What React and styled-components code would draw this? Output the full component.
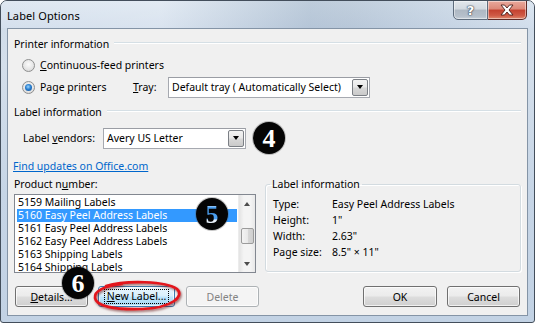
import React from 'react';
import styled, { createGlobalStyle } from 'styled-components';

const Global = createGlobalStyle`
  html, body { margin: 0; padding: 0; width: 535px; height: 323px; overflow: hidden; background: #ffffff; }
  body { font-family: "Noto Sans", "Open Sans", sans-serif; font-size: 10.5px; color: #000; }
  * { box-sizing: border-box; }
`;

const Window = styled.div`
  width: 535px;
  height: 323px;
  border: 1px solid #434e5b;
  border-radius: 7px 7px 3px 3px;
  background: linear-gradient(180deg, #cfdbe8 0%, #d4dfeb 20%, #c6d5e6 60%, #c2d2e4 100%);
  display: flex;
  flex-direction: column;
  overflow: hidden;
  position: relative;
`;

const TitleBar = styled.div`
  height: 27px;
  display: flex;
  align-items: flex-start;
  justify-content: space-between;
  padding: 0 6px 0 6px;
  background:
    linear-gradient(90deg, rgba(255,255,255,0.15) 0%, rgba(255,255,255,0.25) 30%, rgba(110,135,160,0.25) 58%, rgba(90,115,140,0.18) 66%, rgba(150,170,190,0.25) 75%, rgba(255,255,255,0.1) 100%),
    linear-gradient(180deg, #d9e4ef 0%, #cddaea 100%);
`;

const Title = styled.div`
  margin-top: 7px;
  font-size: 11px;
  color: #000;
  letter-spacing: 0.1px;
`;

const CaptionButtons = styled.div`
  display: flex;
  margin-top: -1px;
  margin-right: 1px;
`;

const CaptionButton = styled.div`
  height: 20px;
  width: ${p => p.$w}px;
  display: flex;
  align-items: center;
  justify-content: center;
  border: 1px solid ${p => (p.$close ? '#5f2a26' : '#5e6c7c')};
  border-left-width: ${p => (p.$close ? 0 : 1)}px;
  border-radius: ${p => (p.$close ? '0 0 5px 0' : '0 0 0 5px')};
  background: ${p =>
    p.$close
      ? 'linear-gradient(180deg, #e9a99c 0%, #dc8878 45%, #c4412f 50%, #cf5a45 80%, #e08a6e 100%)'
      : 'linear-gradient(180deg, #e2e7ec 0%, #d2d9e0 45%, #aeb8c3 50%, #b6c0cb 85%, #c8d1da 100%)'};
  box-shadow: inset 0 0 0 1px rgba(255,255,255,0.45);
`;

const HelpGlyph = styled.span`
  font-family: "DejaVu Sans", sans-serif;
  font-weight: bold;
  font-size: 13px;
  color: #ffffff;
  text-shadow: 0 0 1px #3b4756, 0 0 1px #3b4756, 0 0 2px #3b4756;
  line-height: 1;
`;

const Client = styled.div`
  flex: 1;
  margin: 0 6px 6px 6px;
  border: 1px solid #8494a6;
  background: #f0f0f0;
  padding: 8px 6px 0 6px;
  display: flex;
  flex-direction: column;
  position: relative;
`;

const Heading = styled.div`
  display: flex;
  align-items: center;
  height: 14px;
  margin-top: ${p => p.$mt || 0}px;
  gap: 5px;
`;

const HeadingText = styled.span`
  white-space: nowrap;
`;

const HeadingLine = styled.span`
  flex: 1;
  height: 2px;
  margin-top: -2px;
  border-top: 1px solid #d5dfe5;
  border-bottom: 1px solid #ffffff;
`;

const Row = styled.div`
  display: flex;
  align-items: center;
  height: ${p => p.$h}px;
  margin-top: ${p => p.$mt || 0}px;
  padding-left: ${p => p.$pl || 0}px;
`;

const RadioCircle = styled.span`
  width: 13px;
  height: 13px;
  border-radius: 50%;
  border: 1px solid #8e8f8f;
  background: radial-gradient(circle at 50% 40%, #fbfbfb 0%, #e6e6e6 55%, #cfcfcf 100%);
  display: inline-flex;
  align-items: center;
  justify-content: center;
  flex: none;
  &::after {
    content: '';
    width: 7px;
    height: 7px;
    border-radius: 50%;
    background: ${p =>
      p.$checked
        ? 'radial-gradient(circle at 45% 40%, #9bd7ff 0%, #2a7fd0 45%, #0f4a8c 100%)'
        : 'transparent'};
  }
`;

const RadioLabel = styled.span`
  margin-left: 5px;
  width: ${p => (p.$w ? `${p.$w}px` : 'auto')};
  white-space: nowrap;
`;

const FieldLabel = styled.span`
  width: ${p => p.$w}px;
  flex: none;
  white-space: nowrap;
`;

const Combo = styled.div`
  width: ${p => p.$w}px;
  height: 21px;
  border: 1px solid #a6a9b0;
  border-top-color: #9a9da4;
  background: #ffffff;
  display: flex;
  align-items: center;
  justify-content: space-between;
  padding: 0 1px 0 3px;
  flex: none;
`;

const ComboText = styled.span`
  white-space: nowrap;
`;

const ComboButton = styled.span`
  width: 16px;
  height: 17px;
  border: 1px solid #7b7f85;
  border-radius: 2px;
  background: linear-gradient(180deg, #f2f2f2 0%, #e8e8e8 48%, #d8d8d8 52%, #cacaca 100%);
  display: flex;
  align-items: center;
  justify-content: center;
  &::after {
    content: '';
    border-left: 3.5px solid transparent;
    border-right: 3.5px solid transparent;
    border-top: 4px solid #000;
  }
`;

const Badge = styled.span`
  width: 32px;
  height: 32px;
  border-radius: 50%;
  background: #050505;
  box-shadow: 0 0 0 1px rgba(90, 90, 90, 0.35);
  display: flex;
  align-items: center;
  justify-content: center;
  font-family: "Liberation Serif", "DejaVu Serif", serif;
  font-weight: bold;
  font-size: 26px;
  line-height: 1;
  color: #ffffff;
  flex: none;
  margin-left: ${p => p.$ml || 0}px;
`;

const FloatingBadge = styled(Badge)`
  position: absolute;
  left: ${p => p.$x}px;
  top: ${p => p.$y}px;
  z-index: 3;
`;

const BadgeDigit = styled.span`
  padding-top: 2px;
  ${p =>
    p.$blue &&
    `
    background: linear-gradient(180deg, #e9f3ff 0%, #e9f3ff 22%, #4b9ff0 24%, #4b9ff0 68%, #eaf2fb 71%, #eaf2fb 100%);
    -webkit-background-clip: text;
    background-clip: text;
    color: transparent;
  `}
`;

const Link = styled.a`
  display: block;
  height: 14px;
  line-height: 14px;
  margin-top: 10px;
  margin-left: -1px;
  color: #0066cc;
  text-decoration: underline;
  white-space: nowrap;
  align-self: flex-start;
`;

const Lower = styled.div`
  display: grid;
  grid-template-columns: 242px 1fr;
  column-gap: 9px;
  margin-top: 4px;
`;

const LeftCol = styled.div`
  display: flex;
  flex-direction: column;
`;

const SubLabel = styled.div`
  height: 14px;
  line-height: 14px;
`;

const ListBox = styled.div`
  margin-top: 3px;
  height: 79px;
  border: 1px solid #828790;
  background: #ffffff;
  display: flex;
  overflow: hidden;
`;

const ListItems = styled.div`
  flex: 1;
  padding: 1px 1px 0 2px;
  overflow: hidden;
`;

const ListItem = styled.div`
  height: 13px;
  line-height: 13px;
  padding-left: 1px;
  white-space: nowrap;
  background: ${p => (p.$sel ? '#3399ff' : 'transparent')};
  color: ${p => (p.$sel ? '#ffffff' : '#000000')};
`;

const ScrollBar = styled.div`
  width: 17px;
  display: flex;
  flex-direction: column;
  align-items: center;
  background: linear-gradient(90deg, #e3e3e3 0%, #f4f4f4 30%, #f4f4f4 70%, #e8e8e8 100%);
  border-left: 1px solid #ececec;
`;

const ArrowBox = styled.div`
  height: 17px;
  width: 100%;
  display: flex;
  align-items: center;
  justify-content: center;
  &::after {
    content: '';
    border-left: 3.5px solid transparent;
    border-right: 3.5px solid transparent;
    ${p => (p.$up ? 'border-bottom: 4px solid #4d4d4d;' : 'border-top: 4px solid #4d4d4d;')}
  }
`;

const Thumb = styled.div`
  margin-top: 16px;
  width: 13px;
  height: 16px;
  border: 1px solid #9b9b9b;
  border-radius: 2px;
  background: linear-gradient(90deg, #f3f3f3 0%, #e9e9e9 50%, #d8d8d8 51%, #cfcfcf 100%);
`;

const TrackFill = styled.div`
  flex: 1;
`;

const GroupBox = styled.fieldset`
  margin: 0;
  padding: 0;
  border: 1px solid #d3dbe0;
  border-radius: 3px;
  box-shadow: inset 1px 1px 0 #ffffff, 1px 1px 0 #ffffff;
  height: 95px;
  min-width: 0;
`;

const Legend = styled.legend`
  margin-left: 4px;
  padding: 0 2px;
  height: 14px;
  line-height: 14px;
`;

const InfoGrid = styled.div`
  margin-top: 5px;
  padding-left: 7px;
  display: grid;
  grid-template-columns: 59px 1fr;
  grid-auto-rows: 16px;
  align-items: center;
`;

const InfoCell = styled.span`
  white-space: nowrap;
`;

const ButtonRow = styled.div`
  display: flex;
  margin-top: 13px;
  padding: 0 1px;
  height: 21px;
`;

const Button = styled.div`
  width: ${p => p.$w}px;
  height: 21px;
  margin-left: ${p => p.$ml || 0}px;
  border: 1px solid ${p => (p.$disabled ? '#adb2b5' : p.$focus ? '#3c7fb1' : '#707070')};
  border-radius: 3px;
  background: ${p =>
    p.$disabled
      ? '#f4f4f4'
      : p.$focus
      ? 'linear-gradient(180deg, #eaf6fd 0%, #d9f0fc 48%, #bee6fd 52%, #a7d9f5 100%)'
      : 'linear-gradient(180deg, #f2f2f2 0%, #ebebeb 48%, #dddddd 52%, #cfcfcf 100%)'};
  box-shadow: inset 0 0 0 1px rgba(255, 255, 255, 0.7);
  color: ${p => (p.$disabled ? '#838383' : '#000')};
  display: flex;
  align-items: center;
  justify-content: center;
  white-space: nowrap;
  flex: none;
`;

const FocusText = styled.span`
  outline: 1px dotted #000;
  outline-offset: 0px;
  padding: 0 2px;
  line-height: 13px;
`;

const Spacer = styled.div`
  flex: 1;
`;

const Ellipse = styled.svg`
  position: absolute;
  left: 84px;
  top: 251px;
  z-index: 2;
  overflow: visible;
`;

const items = [
  '5159 Mailing Labels',
  '5160 Easy Peel Address Labels',
  '5161 Easy Peel Address Labels',
  '5162 Easy Peel Address Labels',
  '5163 Shipping Labels',
  '5164 Shipping Labels',
];

export default function App() {
  return (
    <>
      <Global />
      <Window>
        <TitleBar>
          <Title>Label Options</Title>
          <CaptionButtons>
            <CaptionButton $w={35}>
              <HelpGlyph>?</HelpGlyph>
            </CaptionButton>
            <CaptionButton $w={39} $close>
              <svg width="14" height="12" viewBox="0 0 14 12">
                <path
                  d="M1 1 H4.5 L7 4 L9.5 1 H13 L9 6 L13 11 H9.5 L7 8 L4.5 11 H1 L5 6 Z"
                  fill="#ffffff"
                  stroke="#4a1f1b"
                  strokeWidth="0.9"
                  strokeLinejoin="round"
                />
              </svg>
            </CaptionButton>
          </CaptionButtons>
        </TitleBar>
        <Client>
          <Heading>
            <HeadingText>Printer information</HeadingText>
            <HeadingLine />
          </Heading>
          <Row $h={20} $mt={4} $pl={8}>
            <RadioCircle />
            <RadioLabel><u>C</u>ontinuous-feed printers</RadioLabel>
          </Row>
          <Row $h={22} $mt={1} $pl={8}>
            <RadioCircle $checked />
            <RadioLabel $w={93}>Pa<u>g</u>e printers</RadioLabel>
            <FieldLabel $w={35}><u>T</u>ray:</FieldLabel>
            <Combo $w={202}>
              <ComboText>Default tray ( Automatically Select)</ComboText>
              <ComboButton />
            </Combo>
          </Row>
          <Heading $mt={7}>
            <HeadingText>Label information</HeadingText>
            <HeadingLine />
          </Heading>
          <Row $h={22} $mt={8} $pl={9}>
            <FieldLabel $w={80}>Label <u>v</u>endors:</FieldLabel>
            <Combo $w={143}>
              <ComboText>Avery US Letter</ComboText>
              <ComboButton />
            </Combo>
            <Badge $ml={7}><BadgeDigit>4</BadgeDigit></Badge>
          </Row>
          <Link>Find updates on Office.com</Link>
          <Lower>
            <LeftCol>
              <SubLabel>Product n<u>u</u>mber:</SubLabel>
              <ListBox>
                <ListItems>
                  {items.map((t, i) => (
                    <ListItem key={t} $sel={i === 1}>{t}</ListItem>
                  ))}
                </ListItems>
                <ScrollBar>
                  <ArrowBox $up />
                  <Thumb />
                  <TrackFill />
                  <ArrowBox />
                </ScrollBar>
              </ListBox>
            </LeftCol>
            <GroupBox>
              <Legend>Label information</Legend>
              <InfoGrid>
                <InfoCell>Type:</InfoCell>
                <InfoCell>Easy Peel Address Labels</InfoCell>
                <InfoCell>Height:</InfoCell>
                <InfoCell>1"</InfoCell>
                <InfoCell>Width:</InfoCell>
                <InfoCell>2.63"</InfoCell>
                <InfoCell>Page size:</InfoCell>
                <InfoCell>8.5" × 11"</InfoCell>
              </InfoGrid>
            </GroupBox>
          </Lower>
          <ButtonRow>
            <Button $w={73}><span><u>D</u>etails...</span></Button>
            <Button $w={77} $ml={10} $focus><FocusText><u>N</u>ew Label...</FocusText></Button>
            <Button $w={73} $ml={11} $disabled>Delete</Button>
            <Spacer />
            <Button $w={74}>OK</Button>
            <Button $w={73} $ml={10}>Cancel</Button>
          </ButtonRow>
          <FloatingBadge $x={188} $y={169}><BadgeDigit $blue>5</BadgeDigit></FloatingBadge>
          <FloatingBadge $x={54} $y={238}><BadgeDigit>6</BadgeDigit></FloatingBadge>
          <Ellipse width="90" height="32" viewBox="0 0 90 32">
            <defs>
              <filter id="sh" x="-10%" y="-20%" width="120%" height="140%">
                <feDropShadow dx="1" dy="1.5" stdDeviation="1" floodColor="#5a0000" floodOpacity="0.6" />
              </filter>
            </defs>
            <g filter="url(#sh)" fill="none" stroke="#e3141b" strokeLinecap="round">
              <path d="M14 6 C34 0, 74 1, 85 9 C93 16, 80 28, 50 29 C22 30, 4 26, 3 18 C2 11, 12 6, 30 4" strokeWidth="2.6" />
            </g>
          </Ellipse>
        </Client>
      </Window>
    </>
  );
}
